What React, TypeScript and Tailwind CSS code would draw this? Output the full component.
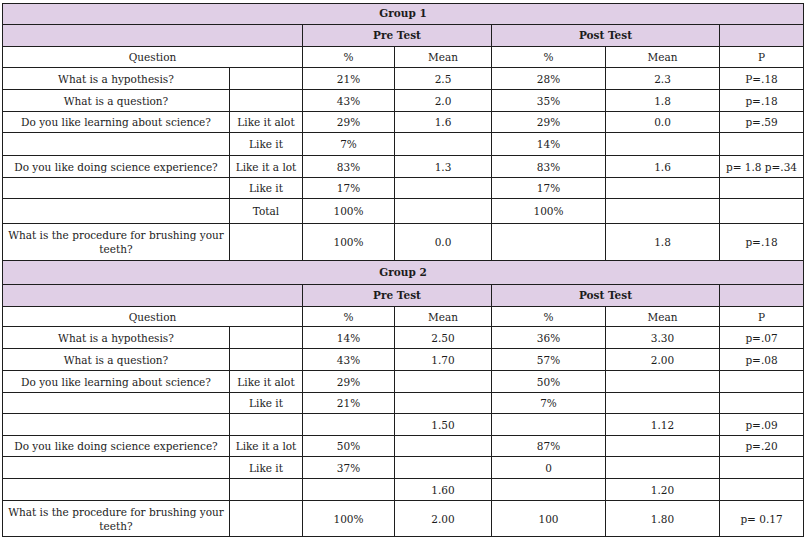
import React from "react";

type Row = { h: number; cells: string[] };

const cols = [227, 73, 92, 97, 114, 114, 84];

const group1: Row[] = [
  { h: 22, cells: ["What is a hypothesis?", "", "21%", "2.5", "28%", "2.3", "P=.18"] },
  { h: 22, cells: ["What is a question?", "", "43%", "2.0", "35%", "1.8", "p=.18"] },
  { h: 21, cells: ["Do you like learning about science?", "Like it alot", "29%", "1.6", "29%", "0.0", "p=.59"] },
  { h: 23, cells: ["", "Like it", "7%", "", "14%", "", ""] },
  { h: 22, cells: ["Do you like doing science experience?", "Like it a lot", "83%", "1.3", "83%", "1.6", "p= 1.8 p=.34"] },
  { h: 21, cells: ["", "Like it", "17%", "", "17%", "", ""] },
  { h: 25, cells: ["", "Total", "100%", "", "100%", "", ""] },
  { h: 37, cells: ["What is the procedure for brushing your teeth?", "", "100%", "0.0", "", "1.8", "p=.18"] },
];

const group2: Row[] = [
  { h: 22, cells: ["What is a hypothesis?", "", "14%", "2.50", "36%", "3.30", "p=.07"] },
  { h: 22, cells: ["What is a question?", "", "43%", "1.70", "57%", "2.00", "p=.08"] },
  { h: 22, cells: ["Do you like learning about science?", "Like it alot", "29%", "", "50%", "", ""] },
  { h: 21, cells: ["", "Like it", "21%", "", "7%", "", ""] },
  { h: 22, cells: ["", "", "", "1.50", "", "1.12", "p=.09"] },
  { h: 21, cells: ["Do you like doing science experience?", "Like it a lot", "50%", "", "87%", "", "p=.20"] },
  { h: 22, cells: ["", "Like it", "37%", "", "0", "", ""] },
  { h: 22, cells: ["", "", "", "1.60", "", "1.20", ""] },
  { h: 36, cells: ["What is the procedure for brushing your teeth?", "", "100%", "2.00", "100", "1.80", "p= 0.17"] },
];

const td = "border border-[#1e1e1e] p-0 text-center align-middle leading-[14px]";
const head = "border border-[#1e1e1e] bg-[#e0cfe6] p-0 text-center align-middle font-bold";

function Group({ title, rows, top }: { title: string; rows: Row[]; top: number[] }) {
  return (
    <>
      <tr style={{ height: top[0] }}>
        <td colSpan={7} className={head}>{title}</td>
      </tr>
      <tr style={{ height: top[1] }}>
        <td colSpan={2} className={head}></td>
        <td colSpan={2} className={head}>Pre Test</td>
        <td colSpan={2} className={head}>Post Test</td>
        <td className={head}></td>
      </tr>
      <tr style={{ height: top[2] }}>
        <td colSpan={2} className={td}>Question</td>
        <td className={td}>%</td>
        <td className={td}>Mean</td>
        <td className={td}>%</td>
        <td className={td}>Mean</td>
        <td className={td}>P</td>
      </tr>
      {rows.map((r, i) => (
        <tr key={i} style={{ height: r.h }}>
          {r.cells.map((c, j) => (
            <td key={j} className={j === 0 ? td + " px-1" : td + " whitespace-nowrap"}>
              {c}
            </td>
          ))}
        </tr>
      ))}
    </>
  );
}

export default function App() {
  return (
    <div className="w-[807px] h-[540px] bg-white pl-[2px] pt-[3px] font-['DejaVu_Serif',serif] text-[10.5px] text-[#1c1c1c]">
      <table className="border-collapse table-fixed w-[801px]">
        <colgroup>
          {cols.map((w, i) => (
            <col key={i} style={{ width: w }} />
          ))}
        </colgroup>
        <tbody>
          <Group title="Group 1" rows={group1} top={[21, 22, 21]} />
          <Group title="Group 2" rows={group2} top={[24, 22, 20]} />
        </tbody>
      </table>
    </div>
  );
}
